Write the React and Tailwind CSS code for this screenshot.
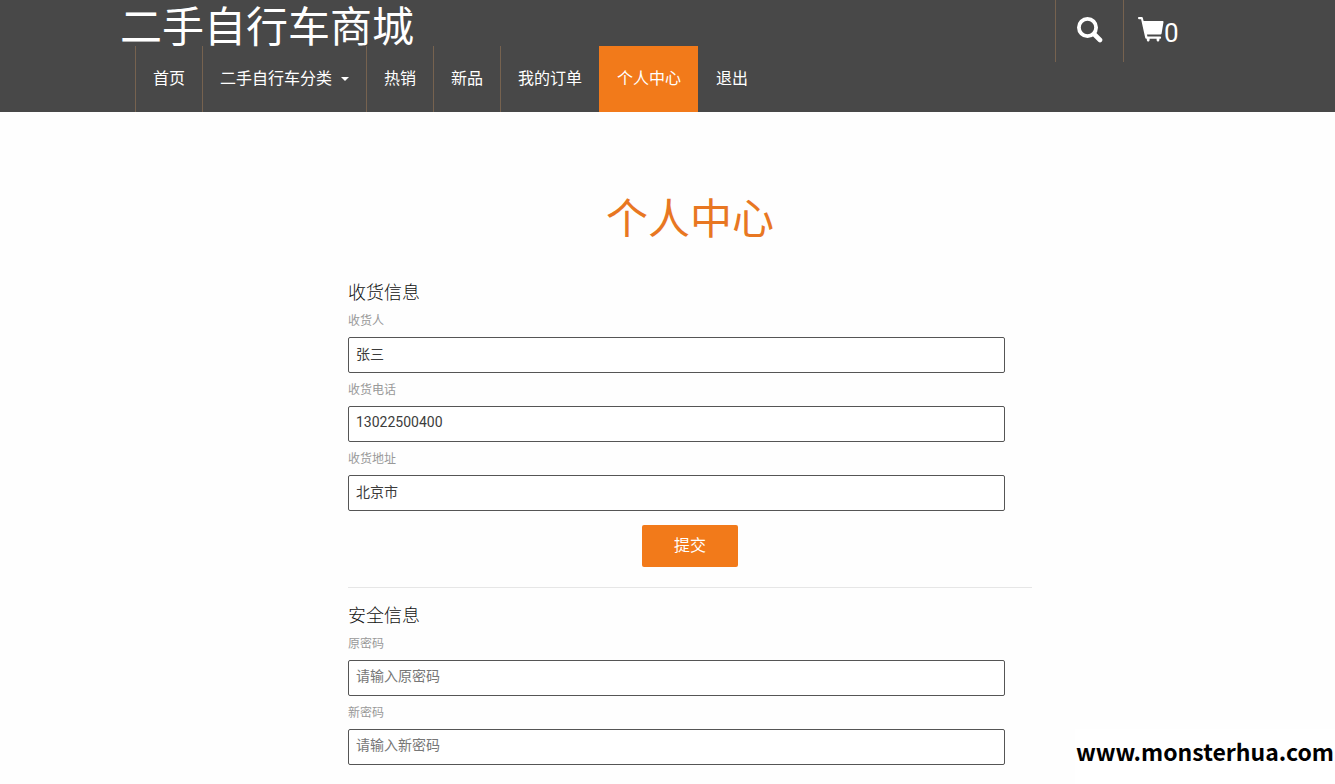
import React from "react";

const navItems = [
  { label: "首页" },
  { label: "二手自行车分类", caret: true },
  { label: "热销" },
  { label: "新品" },
  { label: "我的订单" },
  { label: "个人中心", active: true },
  { label: "退出" },
];

function SearchIcon() {
  return (
    <svg className="size-[26px]" viewBox="0 0 26 26" fill="none" stroke="currentColor" aria-hidden="true">
      <circle cx="10.5" cy="10.5" r="8.6" strokeWidth="3.8" />
      <path d="M17.500 17.500l5.500 5.500" strokeWidth="4.600" strokeLinecap="round" />
    </svg>
  );
}

function CartIcon() {
  return (
    <svg className="h-[26px] w-[26px]" viewBox="0 0 26 26" fill="currentColor" aria-hidden="true">
      <path d="M1 0h2.800c.5 0 .9.3 1 .8L5.600 4H24.500c.7 0 1.100.5 1 1.100L23.600 16.500c-.1.6-.5 1-1.100 1H9l.4 2.100H22c.7 0 1.100.5 1.100 1.100s-.5 1.100-1.100 1.100h-.6v1.100c0 .9-.6 1.500-1.400 1.500s-1.400-.6-1.400-1.500v-1.100h-7v1.100c0 .9-.6 1.500-1.400 1.500s-1.400-.6-1.400-1.500v-1.100h-.5c-.6 0-1-.4-1.100-1L3.100 2.200H1C.4 2.200 0 1.700 0 1.100S.4 0 1 0z" />
    </svg>
  );
}

function Header() {
  return (
    <header className="bg-[#484848] pl-[45px] text-white">
      <div className="mx-auto flex max-w-[1140px] justify-between">
        <div>
          <h1 className="h-[46px] text-[42px] leading-[56px] font-normal">
            <a href="#home">二手自行车商城</a>
          </h1>
          <nav className="pl-[15px]">
            <ul className="flex">
              {navItems.map((item) => (
                <li key={item.label}>
                  <a
                    href={"#" + item.label}
                    className={
                      "flex h-[66px] items-center border-l px-[17px] text-base " +
                      (item.active
                        ? "border-[#f27a1a] bg-[#f27a1a]"
                        : item.label === "退出"
                          ? "border-transparent"
                          : "border-[#76624f]")
                    }
                  >
                    {item.label}
                    {item.caret && (
                      <span className="ml-[9px] border-x-4 border-t-4 border-x-transparent border-t-white" />
                    )}
                  </a>
                </li>
              ))}
            </ul>
          </nav>
        </div>
        <div className="flex h-[62px] pr-[69px]">
          <button type="button" aria-label="搜索" className="flex w-[68px] justify-center border-l border-[#76624f] pt-[17px]">
            <SearchIcon />
          </button>
          <a href="#cart" aria-label="购物车 0" className="flex w-[68px] border-l border-[#76624f] pt-[17px] pl-[14px] text-[26px] leading-8">
            <CartIcon />
            <span>0</span>
          </a>
        </div>
      </div>
    </header>
  );
}

function Field({ id, label, ...props }) {
  return (
    <div>
      <label htmlFor={id} className="mt-[9px] mb-2 block text-xs leading-4 text-[#999]">
        {label}
      </label>
      <input
        id={id}
        className="block h-9 w-[96%] rounded-[2px] border border-[#555] bg-white px-[7px] pb-1 text-sm text-[#3c3c3c] outline-none placeholder:text-[#777]"
        {...props}
      />
    </div>
  );
}

export default function App() {
  return (
    <div className="relative min-h-screen overflow-hidden bg-[#fefefe] font-['Roboto','Noto_Sans_CJK_SC',sans-serif]">
      <Header />
      <main className="pl-[45px]">
        <div className="mx-auto max-w-[1140px] pt-[78px]">
          <div className="mx-auto w-3/5">
            <h2 className="text-center text-[42px] leading-[60px] font-normal text-[#e87722]">个人中心</h2>
            <form className="mt-8" onSubmit={(e) => e.preventDefault()}>
              <h3 className="text-lg leading-[22px] font-light text-[#111]">收货信息</h3>
              <Field id="receiver" label="收货人" type="text" defaultValue="张三" />
              <Field id="phone" label="收货电话" type="text" defaultValue="13022500400" />
              <Field id="address" label="收货地址" type="text" defaultValue="北京市" />
              <button type="submit" className="mx-auto mt-[14px] block h-[42px] w-24 rounded-[2px] bg-[#f27a1a] text-base text-white">
                提交
              </button>
            </form>
            <hr className="mt-5 border-[#e6e6e6]" />
            <form className="mt-[17px] pb-5" onSubmit={(e) => e.preventDefault()}>
              <h3 className="text-lg leading-[22px] font-light text-[#111]">安全信息</h3>
              <Field id="old-password" label="原密码" type="password" placeholder="请输入原密码" />
              <Field id="new-password" label="新密码" type="password" placeholder="请输入新密码" />
            </form>
          </div>
        </div>
      </main>
      <div className="absolute right-0 bottom-0 bg-white px-px pt-1 pb-4 font-['Noto_Sans_CJK_SC',sans-serif] text-[23px] leading-9 font-bold text-black">
        www.monsterhua.com
      </div>
    </div>
  );
}
